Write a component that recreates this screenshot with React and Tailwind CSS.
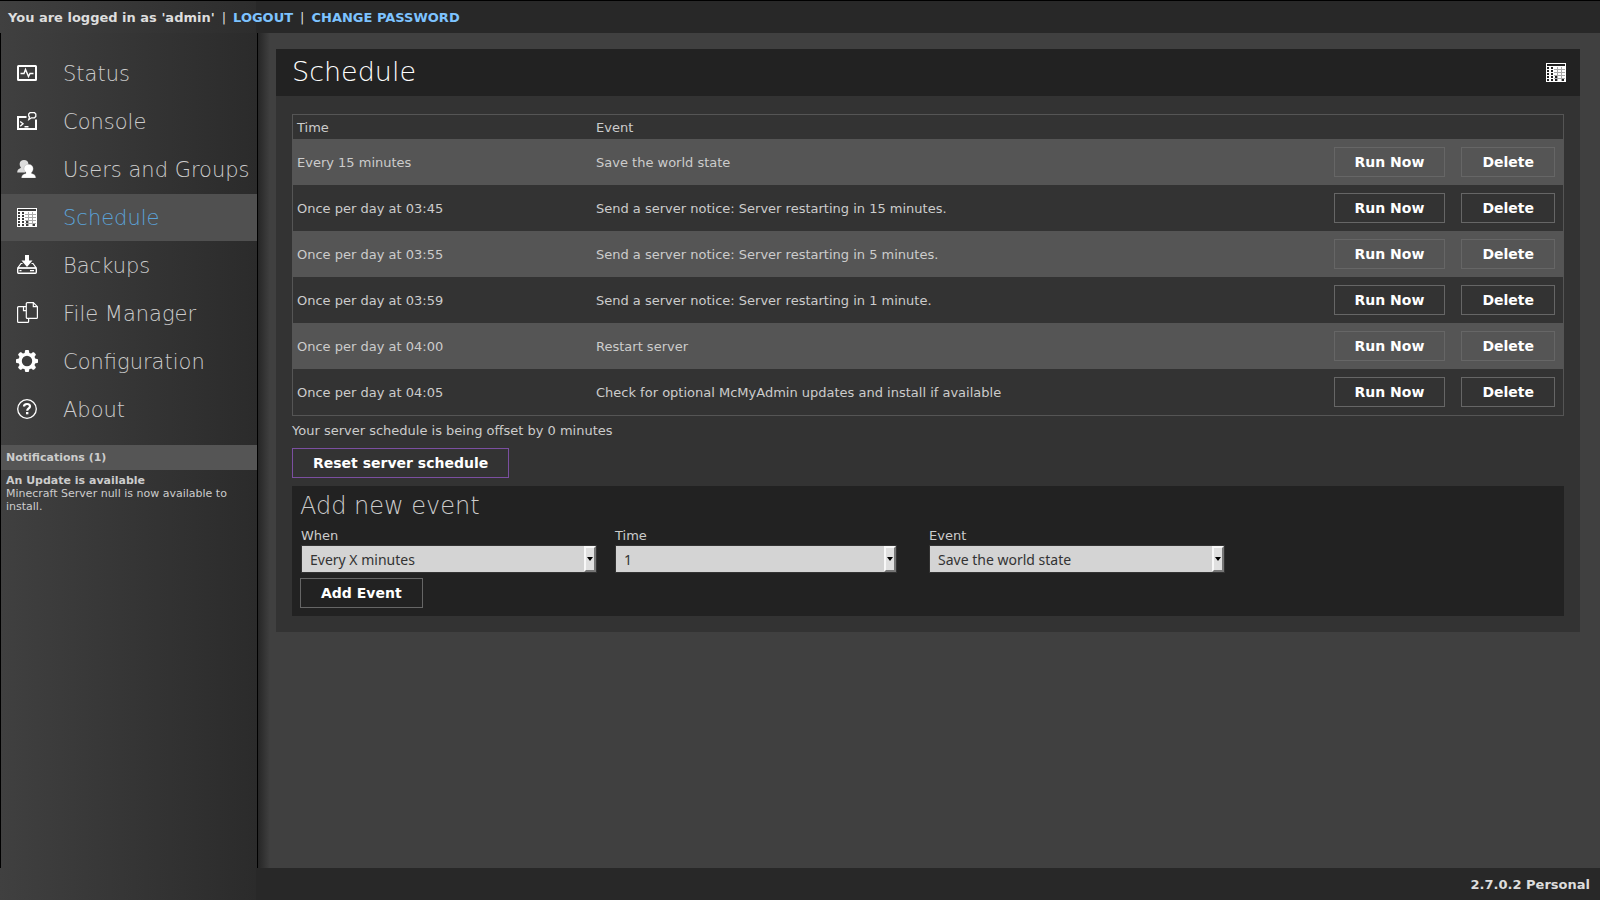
import React from "react";

function StatusIcon() {
  return (
    <svg width="20" height="16" viewBox="0 0 20 16" fill="none" stroke="#fff" aria-hidden="true">
      <rect x="1" y="1" width="18" height="14" rx="0.5" strokeWidth="2" />
      <path d="M3.500 8.500H7l1.500-4 3 7 1.500-3h3.500" strokeWidth="1.400" />
    </svg>
  );
}

function ConsoleIcon() {
  return (
    <svg width="20" height="18" viewBox="0 0 20 18" fill="none" stroke="#fff" aria-hidden="true">
      <path d="M9.500 5H1v12h18V7.500" strokeWidth="2" />
      <path d="M3.200 9.500l2.800 2.300-2.800 2.400M7.500 14.700h4" strokeWidth="1.400" />
      <path d="M13 .7h4.500l1.300 1.300v2.500l-1.300 1.300h-3l-2.700 1.700.7-2.500-.8-1V2z" strokeWidth="1.300" />
    </svg>
  );
}

function UsersIcon() {
  return (
    <svg width="20" height="18" viewBox="0 0 20 18" aria-hidden="true">
      <path
        fill="#dcdcdc"
        d="M7 0c2.600 0 4.400 1.500 4.400 4l-.5 3C9 8 8.500 10 8 12.500H.2c0-2.500 1-3.500 3-4.300L4 7.500C2.800 6 2.600 5 2.700 3.500 2.900 1.300 4.500 0 7 0z"
      />
      <path
        fill="#fff"
        stroke="#888"
        strokeWidth="0.3"
        d="M11.500 4.300c2.800 0 4.700 1.700 4.700 4.200 0 1.700-.6 3-1.700 4v1c2.500.6 4.200 1.500 4.300 4.500H4.500c.1-3 2-3.900 4.500-4.500v-1c-1.300-1-2-2.300-2-4 0-2.500 1.900-4.200 4.500-4.200z"
      />
    </svg>
  );
}

const darkCells = [
  [1, 4], [5, 4], [1, 7], [5, 7], [1, 10], [5, 10], [1, 13], [5, 13], [9, 13], [1, 16], [5, 16], [9, 16], [16, 16],
];

function ScheduleIcon({ cell }) {
  return (
    <svg width="20" height="20" viewBox="0 -1 20 20" aria-hidden="true" shapeRendering="crispEdges">
      <rect width="20" height="19" fill="#fff" />
      <rect x="1" y="1" width="18" height="2" fill={cell} />
      <rect x="2" y="3" width="16" height="1" fill="#fff" />
      <path d="M11.500 4v14M15.500 4v14M8 6.500h11M8 9.500h11M8 12.500h11M8 15.500h11" stroke="#aaa" strokeWidth="1" />
      {darkCells.map(([x, y]) => (
        <rect key={x + "-" + y} x={x} y={y} width="2" height="2" fill={cell} />
      ))}
    </svg>
  );
}

function BackupIcon() {
  return (
    <svg width="20" height="20" viewBox="0 0 20 20" fill="none" stroke="#fff" aria-hidden="true">
      <path d="M8 0h4v5.500h3.500L10 12 4.500 5.500H8z" fill="#fff" stroke="none" />
      <path d="M5.500 8.500H4L.8 13h18.400L16 8.500h-1.500" strokeWidth="1.200" />
      <rect x="0.700" y="13" width="18.600" height="5.300" rx="1" strokeWidth="1.400" />
      <path d="M2.500 15.700h2M13 15.700h4" strokeWidth="1.200" />
    </svg>
  );
}

function FilesIcon() {
  return (
    <svg width="22" height="22" viewBox="-1 0 22 22" fill="none" stroke="#fff" strokeWidth="1.200" aria-hidden="true">
      <path d="M9 4.600H1.600q-1 0-1 1v13.800q0 1 1 1h9q1 0 1-1v-3" />
      <path d="M6.500 4.600v4h2.500" />
      <path d="M10.300.6h6l4.100 4.100v10.700q0 1-1 1h-9.100q-1 0-1-1V1.600q0-1 1-1z" />
      <path d="M16.300.6v4.100h4.100" />
    </svg>
  );
}

function GearIcon() {
  return (
    <svg width="22" height="22" viewBox="0 0 22 22" aria-hidden="true">
      <circle cx="11" cy="11" r="6.900" fill="none" stroke="#fff" strokeWidth="3.400" />
      <g fill="#fff">
        {[0, 45, 90, 135, 180, 225, 270, 315].map((a) => (
          <path key={a} d="M8.600 3.500L9 .8q.1-.8.800-.8h2.400q.7 0 .8.800l.4 2.700z" transform={`rotate(${a} 11 11)`} />
        ))}
      </g>
    </svg>
  );
}

function AboutIcon() {
  return (
    <svg width="20" height="20" viewBox="0 0 20 20" fill="none" stroke="#fff" aria-hidden="true">
      <circle cx="10" cy="10" r="9.300" strokeWidth="1.300" />
      <path d="M7 7.600C7 5.800 8.200 5 10 5s3 .9 3 2.500c0 2-2.800 2-2.800 4.300" strokeWidth="2.200" />
      <rect x="9" y="13" width="2.400" height="2.300" fill="#fff" stroke="none" />
    </svg>
  );
}

const menu = [
  ["Status", <StatusIcon />],
  ["Console", <ConsoleIcon />],
  ["Users and Groups", <UsersIcon />],
  ["Schedule", <ScheduleIcon cell="#3c3c3c" />],
  ["Backups", <BackupIcon />],
  ["File Manager", <FilesIcon />],
  ["Configuration", <GearIcon />],
  ["About", <AboutIcon />],
];

const events = [
  ["Every 15 minutes", "Save the world state"],
  ["Once per day at 03:45", "Send a server notice: Server restarting in 15 minutes."],
  ["Once per day at 03:55", "Send a server notice: Server restarting in 5 minutes."],
  ["Once per day at 03:59", "Send a server notice: Server restarting in 1 minute."],
  ["Once per day at 04:00", "Restart server"],
  ["Once per day at 04:05", "Check for optional McMyAdmin updates and install if available"],
];

function Button({ children, className = "border-[#666]" }) {
  return (
    <button type="button" className={`h-[30px] border px-5 text-[14px] leading-7 font-bold text-white ${className}`}>
      {children}
    </button>
  );
}

function Field({ id, label, value, width }) {
  return (
    <div className="w-[314px]">
      <label htmlFor={id} className="block leading-[19px]">
        {label}
      </label>
      <div className={`relative ${width}`}>
        <select
          id={id}
          defaultValue={value}
          className="block h-7 w-full appearance-none border border-[#333] bg-[#d4d4d4] pr-4 pl-2 font-['Noto_Sans',sans-serif] text-[14px] text-[#333]"
        >
          <option>{value}</option>
        </select>
        <span className="pointer-events-none absolute top-px right-px bottom-px flex w-3 items-center justify-center border-2 border-t-[#f8f8f8] border-r-[#777] border-b-[#777] border-l-[#f8f8f8] bg-[#e0e0e0]">
          <svg width="6" height="4" viewBox="0 0 6 4" className="shrink-0" aria-hidden="true">
            <path d="M0 0h6L3 4z" fill="#000" />
          </svg>
        </span>
      </div>
    </div>
  );
}

export default function App() {
  return (
    <div className="flex min-h-screen flex-col bg-[#404040] font-['DejaVu_Sans',sans-serif] text-[13px] text-[#ccc]">
      <header className="flex h-[33px] items-center gap-[7px] border-t border-black bg-[linear-gradient(to_right,#404040,#2d2d2d_256px,#282828_256px)] px-2 pt-0.5 font-bold text-[#ddd]">
        <span>You are logged in as 'admin'</span>
        <span className="font-normal">|</span>
        <a href="#logout" className="text-[#7dc3ff]">LOGOUT</a>
        <span className="font-normal">|</span>
        <a href="#password" className="text-[#7dc3ff]">CHANGE PASSWORD</a>
      </header>

      <div className="flex flex-1">
        <aside className="w-[258px] shrink-0 border-x border-black bg-linear-to-r from-[#404040] to-[#2b2b2b] pt-[17px]">
          <nav className="flex flex-col gap-px">
            {menu.map(([name, icon]) => (
              <a
                key={name}
                href="#"
                className={`flex h-[47px] items-center text-[21px] font-extralight whitespace-nowrap ${
                  name === "Schedule" ? "bg-[#505050] text-[#5ba3d9]" : "text-[#ccc]"
                }`}
              >
                <span className="flex h-[46px] w-[52px] shrink-0 items-center justify-center self-start">{icon}</span>
                <span className="pt-0.5 pl-[10px]">{name}</span>
              </a>
            ))}
          </nav>
          <section className="mt-3 text-[11px] leading-[13px]">
            <h2 className="bg-[#555] px-[5px] leading-[25px] font-bold">Notifications (1)</h2>
            <div className="px-[5px] pt-1">
              <h3 className="font-bold">An Update is available</h3>
              <p>Minecraft Server null is now available to install.</p>
            </div>
          </section>
        </aside>

        <main className="min-w-0 flex-1 bg-[linear-gradient(to_right,#262626,#404040_12px)] pt-4 pr-5 pl-[18px]">
          <div className="bg-[#333]">
            <div className="flex h-[47px] items-center justify-between bg-[#222] pr-[14px] pb-px pl-4">
              <h1 className="pb-px text-[27px] leading-10 font-extralight text-white">Schedule</h1>
              <ScheduleIcon cell="#222" />
            </div>
            <div className="px-4 pt-[18px] pb-4">
              <table className="w-full border-separate border-spacing-0 border border-[#555] text-left">
                <thead>
                  <tr className="h-6">
                    <th className="w-[299px] px-1 pt-0.5 font-normal">Time</th>
                    <th className="px-1 pt-0.5 font-normal">Event</th>
                    <th aria-label="Actions" />
                  </tr>
                </thead>
                <tbody>
                  {events.map(([time, event]) => (
                    <tr key={time} className="h-[46px] odd:bg-[#555]">
                      <td className="px-1 pt-0.5">{time}</td>
                      <td className="px-1 pt-0.5">{event}</td>
                      <td className="pr-2">
                        <div className="flex justify-end gap-4">
                          <Button>Run Now</Button>
                          <Button>Delete</Button>
                        </div>
                      </td>
                    </tr>
                  ))}
                </tbody>
              </table>
              <p className="pt-[5px] leading-5">Your server schedule is being offset by 0 minutes</p>
              <div className="pt-[7px] pb-2">
                <Button className="border-[#7b4fa0]">Reset server schedule</Button>
              </div>
              <form className="bg-[#222] px-2 pb-2" onSubmit={(e) => e.preventDefault()}>
                <h2 className="text-[24px] leading-10 font-extralight">Add new event</h2>
                <div className="flex pb-[5px] pl-px">
                  <Field id="when" label="When" value="Every X minutes" width="w-[296px]" />
                  <Field id="time" label="Time" value="1" width="w-[282px]" />
                  <Field id="event" label="Event" value="Save the world state" width="w-[296px]" />
                </div>
                <Button>Add Event</Button>
              </form>
            </div>
          </div>
        </main>
      </div>

      <footer className="flex h-8 items-center justify-end bg-[linear-gradient(to_right,#404040,#2b2b2b_256px,#282828_256px)] px-[10px] pt-0.5 font-bold text-[#ddd]">
        2.7.0.2 Personal
      </footer>
    </div>
  );
}
